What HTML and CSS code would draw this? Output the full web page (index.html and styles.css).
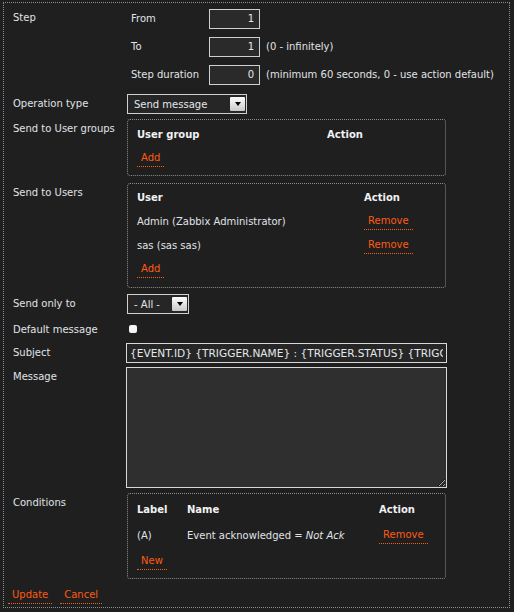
FILE: index.html
```html
<!DOCTYPE html>
<html lang="en">
<head>
  <meta charset="UTF-8" />
  <title>Operation details</title>
  <link rel="stylesheet" href="styles.css">
</head>
<body>
  <form class="form">
    <!-- Step -->
    <div class="row">
      <div class="label label-step">Step</div>
      <div class="step-grid">
        <span>From</span><input class="num" type="text" value="1"><span></span>
        <span>To</span><input class="num" type="text" value="1"><span class="hint">(0 - infinitely)</span>
        <span>Step duration</span><input class="num" type="text" value="0"><span class="hint">(minimum 60 seconds, 0 - use action default)</span>
      </div>
    </div>

    <div class="row row-optype">
      <div class="label">Operation type</div>
      <div class="select select-wide">
        <select><option>Send message</option></select>
      </div>
    </div>

    <div class="row row-groups">
      <div class="label">Send to User groups</div>
      <div class="box box-groups">
        <span class="th">User group</span><span class="th">Action</span>
        <a class="link full" href="#">Add</a>
      </div>
    </div>

    <div class="row row-users">
      <div class="label">Send to Users</div>
      <div class="box box-users">
        <span class="th">User</span><span class="th">Action</span>
        <span>Admin (Zabbix Administrator)</span><a class="link" href="#">Remove</a>
        <span>sas (sas sas)</span><a class="link" href="#">Remove</a>
        <a class="link full" href="#">Add</a>
      </div>
    </div>

    <div class="row row-sendonly">
      <div class="label">Send only to</div>
      <div class="select select-small">
        <select><option>- All -</option></select>
      </div>
    </div>

    <div class="row row-default">
      <div class="label">Default message</div>
      <input class="check" type="checkbox">
    </div>

    <div class="row row-subject">
      <div class="label">Subject</div>
      <input class="text" type="text" value="{EVENT.ID} {TRIGGER.NAME} : {TRIGGER.STATUS} {TRIGGER.SEVERITY}">
    </div>

    <div class="row row-message">
      <div class="label">Message</div>
      <textarea class="area"></textarea>
    </div>

    <div class="row row-conds">
      <div class="label">Conditions</div>
      <div class="box box-conds">
        <span class="th">Label</span><span class="th">Name</span><span class="th">Action</span>
        <span>(A)</span><span>Event acknowledged = <i>Not Ack</i></span><a class="link" href="#">Remove</a>
        <a class="link full" href="#">New</a>
      </div>
    </div>

    <div class="actions">
      <a class="link" href="#">Update</a>
      <a class="link" href="#">Cancel</a>
    </div>
  </form>
</body>
</html>
```

FILE: styles.css
```css
body {
  margin: 0;
  background: #1f1f1f;
  font-family: 'DejaVu Sans', sans-serif;
  font-size: 10px;
  color: #e0e3e6;
}
.form {
  margin: 2px 4px 0 3px;
  border: 1px dotted #8c8c8c;
  padding: 6px 0 3px 0;
}
.row {
  display: flex;
  align-items: flex-start;
}
.label {
  width: 123px;
  flex: none;
  box-sizing: border-box;
  padding: 2px 0 0 9px;
  line-height: 16px;
}
.label-step {
  padding-top: 1px;
}
.row-optype { margin-top: 9px; }
.row-groups { margin-top: 5px; }
.row-users { margin-top: 7px; }
.row-sendonly { margin-top: 6px; }
.row-default { margin-top: 6px; height: 16px; }
.row-subject { margin-top: 7px; }
.row-message { margin-top: 4px; }
.row-conds { margin-top: 5px; }

/* step sub table */
.step-grid {
  display: grid;
  grid-template-columns: 78px 51px auto;
  row-gap: 8px;
  line-height: 20px;
  padding-left: 4px;
}
.hint {
  margin-left: 6px;
  white-space: nowrap;
}
.num {
  width: 51px;
  height: 20px;
  box-sizing: border-box;
  margin: 0;
  background: #2a2a2a;
  border: 1px solid #cfcfcf;
  color: #e6e8ea;
  text-align: right;
  padding: 0 5px;
  font: inherit;
}

/* selects */
.select {
  position: relative;
  height: 20px;
}
.select-wide { width: 120px; }
.select-small { width: 62px; }
.select select {
  appearance: none;
  -webkit-appearance: none;
  width: 100%;
  height: 100%;
  margin: 0;
  box-sizing: border-box;
  background: #262626;
  border: 1px solid #d0d0d0;
  border-radius: 0;
  color: #e4e7ea;
  font: inherit;
  padding: 0 0 0 6px;
}
.select::before {
  content: '';
  position: absolute;
  right: 2px;
  top: 3px;
  width: 15px;
  height: 14px;
  background: linear-gradient(#fdfdfd, #c9c9c9);
  border-radius: 1px;
  pointer-events: none;
}
.select::after {
  content: '';
  position: absolute;
  right: 6px;
  top: 8px;
  width: 0;
  height: 0;
  border-top: 4px solid #000;
  border-left: 3.5px solid transparent;
  border-right: 3.5px solid transparent;
  pointer-events: none;
}

/* dotted boxes */
.box {
  width: 319px;
  box-sizing: border-box;
  border: 1px dotted #8c8c8c;
  border-radius: 3px;
  display: grid;
  row-gap: 8px;
  line-height: 16px;
  justify-items: start;
}
.box-groups {
  grid-template-columns: 190px auto;
  padding: 7px 9px 8px;
}
.box-users {
  grid-template-columns: 227px auto;
  padding: 6px 9px 9px;
}
.box-conds {
  grid-template-columns: 50px 192px auto;
  padding: 8px 9px 8px;
  row-gap: 10px;
}
.th {
  font-weight: bold;
  color: #f0f2f4;
}
.full {
  grid-column: 1 / -1;
}
.link {
  display: inline-block;
  color: #ff5a12;
  text-decoration: none;
  line-height: 14px;
  padding: 0 4px 1px;
  border-bottom: 1px dotted #ff5a12;
}

/* message fields */
.check {
  appearance: none;
  -webkit-appearance: none;
  width: 8px;
  height: 8px;
  margin: 5px 0 0 2px;
  background: #f4f4f4;
  border-radius: 2px;
}
.text {
  width: 321px;
  height: 20px;
  box-sizing: border-box;
  margin: 0 0 0 -1px;
  background: #262626;
  border: 1px solid #d8d8d8;
  color: #e4e8ec;
  font: inherit;
  font-size: 10.6px;
  padding: 0 3px;
}
.area {
  display: block;
  width: 321px;
  height: 121px;
  box-sizing: border-box;
  margin: 0 0 0 -1px;
  background: #2f2f2f;
  border: 1px solid #d8d8d8;
  color: #e4e8ec;
  font: inherit;
}

.actions {
  margin-top: 9px;
  padding-left: 4px;
  display: flex;
  gap: 8px;
}
```
